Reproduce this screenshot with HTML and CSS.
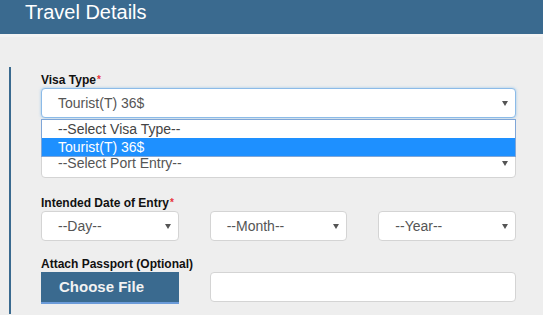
FILE: index.html
```html
<!DOCTYPE html>
<html lang="en">
<head>
    <meta charset="UTF-8">
    <title>Travel Details</title>
    <meta name="viewport" content="width=device-width, initial-scale=1">
    <link rel="stylesheet" href="styles.css">
</head>
<body>
    <div class="panel-head">
        <h1>Travel Details</h1>
    </div>
    <div class="panel-body">
        <div class="form-block">
            <div class="form-group visa">
                <label>Visa Type<span class="req">*</span></label>
                <div class="select-wrap">
                    <div class="select focus">Tourist(T) 36$</div>
                    <!-- dropdown open over the next field -->
                    <ul class="options">
                        <li>--Select Visa Type--</li>
                        <li class="selected">Tourist(T) 36$</li>
                    </ul>
                </div>
            </div>
            <div class="form-group port">
                <div class="label-space"></div>
                <div class="select">--Select Port Entry--</div>
            </div>
            <div class="form-group date">
                <label>Intended Date of Entry<span class="req">*</span></label>
                <div class="row">
                    <div class="select">--Day--</div>
                    <div class="select">--Month--</div>
                    <div class="select">--Year--</div>
                </div>
            </div>
            <div class="form-group passport">
                <label>Attach Passport (Optional)</label>
                <div class="row">
                    <div class="btn-file">Choose File</div>
                    <div class="text-input"></div>
                </div>
            </div>
        </div>
    </div>
</body>
</html>
```
FILE: styles.css
```css
body {
    margin: 0px;
    padding: 0px;
    background: #eeeeee;
    font-family: 'Liberation Sans', Arial, sans-serif;
    font-size: 14px;
    color: #222;
}

.panel-head {
    background: #3a6a8f;
    height: 34px;
    padding: 0px 0px 0px 25px;
}
.panel-head h1 {
    margin: 0px;
    font-size: 20px;
    font-weight: normal;
    line-height: 25px;
    color: #fff;
}

.panel-body {
    border-top: 3px solid #f3f3f3;
    padding: 30px 27px 0px 9px;
}

/* left accent line */
.form-block {
    border-left: 2px solid #3a6a8f;
    padding: 6px 0px 10px 30px;
}

.form-group.visa {
    margin-bottom: 15px;
}
.form-group.port {
    margin-bottom: 18px;
}
.form-group.date {
    margin-bottom: 16px;
}

label {
    display: block;
    font-size: 12px;
    font-weight: bold;
    line-height: 14px;
    margin-bottom: 1px;
    color: #111;
}
.label-space {
    height: 15px;
}
.req {
    color: #e8333b;
    font-size: 10px;
    vertical-align: top;
    margin-left: 1px;
}

.select-wrap {
    position: relative;
}

.select {
    position: relative;
    box-sizing: border-box;
    height: 30px;
    line-height: 28px;
    padding: 0px 16px;
    background: #fff;
    border: 1px solid #d4d4d4;
    border-radius: 4px;
    color: #555;
    font-size: 14px;
}
.select::after {
    content: '';
    position: absolute;
    right: 7px;
    top: 12px;
    border-left: 3px solid transparent;
    border-right: 3px solid transparent;
    border-top: 5px solid #555;
}
.select.focus {
    border-color: #8cbbe8;
    box-shadow: 0 0 3px rgba(102, 175, 233, 0.6);
}

.options {
    position: absolute;
    left: 0px;
    right: 0px;
    top: 31px;
    margin: 0px;
    padding: 0px;
    list-style: none;
    background: #fff;
    border: 1px solid #7fa6d8;
    z-index: 2;
}
.options li {
    height: 18px;
    line-height: 18px;
    padding-left: 16px;
    color: #444;
    font-size: 14px;
}
.options li.selected {
    background: #1e90ff;
    color: #fff;
}

.row {
    display: grid;
    grid-template-columns: 1fr 1fr 1fr;
    gap: 31px;
}

.btn-file {
    box-sizing: border-box;
    height: 32px;
    line-height: 30px;
    padding-left: 18px;
    background: #3a6a8f;
    border-bottom: 2px solid #6b9bd9;
    color: #f2f2f2;
    font-size: 15px;
    font-weight: bold;
}
.text-input {
    grid-column: span 2;
    box-sizing: border-box;
    height: 30px;
    background: #fff;
    border: 1px solid #d4d4d4;
    border-radius: 4px;
}
```
